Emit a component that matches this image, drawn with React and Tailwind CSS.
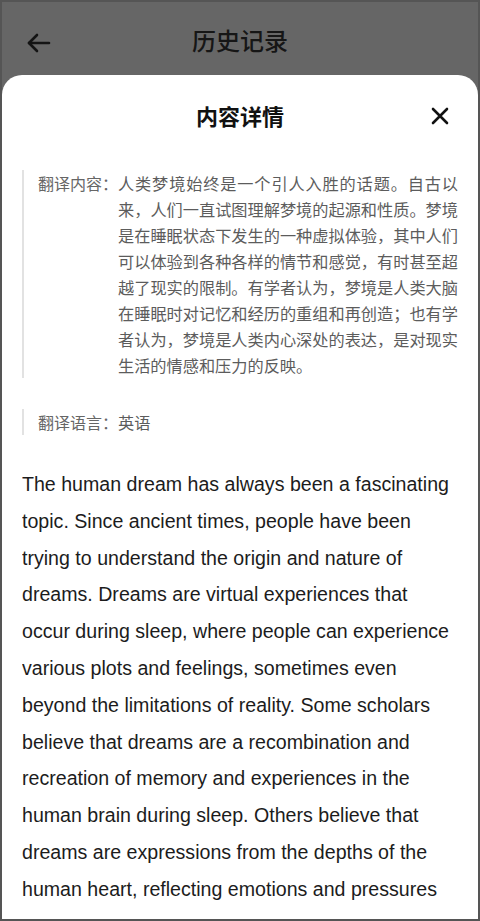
import React from "react";

const cjk = { fontFamily: '"Noto Sans CJK SC", "Noto Sans", sans-serif' };
const en = { fontFamily: '"Liberation Sans", "Noto Sans CJK SC", sans-serif' };

const lines = [
  "人类梦境始终是一个引人入胜的话题。自古以",
  "来，人们一直试图理解梦境的起源和性质。梦境",
  "是在睡眠状态下发生的一种虚拟体验，其中人们",
  "可以体验到各种各样的情节和感觉，有时甚至超",
  "越了现实的限制。有学者认为，梦境是人类大脑",
  "在睡眠时对记忆和经历的重组和再创造；也有学",
  "者认为，梦境是人类内心深处的表达，是对现实",
];

export default function App() {
  return (
    <div
      className="w-[480px] h-[921px] overflow-hidden flex flex-col bg-[#666666] border-2 border-[#555555] box-border"
      style={cjk}
    >
      <div className="h-[73px] shrink-0 relative flex items-center justify-center">
        <svg
          className="absolute left-[24px] top-[29px]"
          width="26"
          height="24"
          viewBox="0 0 26 24"
          fill="none"
          stroke="#141414"
          strokeWidth="2.6"
          strokeLinecap="round"
          strokeLinejoin="round"
        >
          <path d="M23 12H3" />
          <path d="M11 4L3 12L11 20" />
        </svg>
        <span className="text-[24px] font-medium text-[#161616] leading-none mt-[2px]">历史记录</span>
      </div>

      <div className="flex-1 bg-white rounded-t-[20px] flex flex-col overflow-hidden">
        <div className="h-[84px] shrink-0 relative flex items-center justify-center">
          <span className="text-[22px] font-bold text-[#111111] mt-[-4px]">内容详情</span>
          <svg
            className="absolute right-[29px] top-[32px]"
            width="18"
            height="18"
            viewBox="0 0 18 18"
            stroke="#111111"
            strokeWidth="2.6"
            strokeLinecap="round"
          >
            <path d="M2 2L16 16M16 2L2 16" />
          </svg>
        </div>

        <div className="px-[20px] mt-[11px]">
          <div className="flex border-l-[2px] border-[#e2e2e2] pl-[14px] leading-[26px]">
            <span className="text-[16px] text-[#666666] shrink-0 w-[80px]">翻译内容：</span>
            <div className="text-[16.2px] text-[#5c5c5c] w-[341px]">
              {lines.map((l) => (
                <div key={l} className="whitespace-nowrap text-justify [text-align-last:justify]">
                  {l}
                </div>
              ))}
              <div className="whitespace-nowrap">生活的情感和压力的反映。</div>
            </div>
          </div>

          <div className="flex border-l-[2px] border-[#e2e2e2] pl-[14px] leading-[26px] mt-[31px]">
            <span className="text-[16px] text-[#666666] shrink-0 w-[80px]">翻译语言：</span>
            <span className="text-[16.2px] text-[#5c5c5c]">英语</span>
          </div>

          <div className="mt-[31px] h-[442px] overflow-hidden">
            <p
              className="text-[19.6px] leading-[36.8px] text-[#1c1c1c] w-[430px]"
              style={en}
            >
              The human dream has always been a fascinating topic. Since ancient times, people have been trying to understand the origin and nature of dreams. Dreams are virtual experiences that occur during sleep, where people can experience various plots and feelings, sometimes even beyond the limitations of reality. Some scholars believe that dreams are a recombination and recreation of memory and experiences in the human brain during sleep. Others believe that dreams are expressions from the depths of the human heart, reflecting emotions and pressures of real life.
            </p>
          </div>
        </div>
      </div>
    </div>
  );
}
